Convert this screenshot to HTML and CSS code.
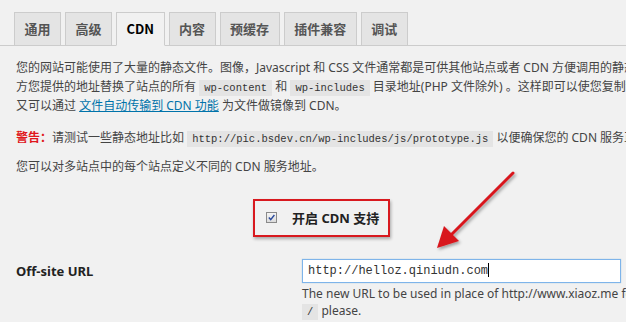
FILE: index.html
```html
<!DOCTYPE html>
<html lang="zh-CN">
<head>
<meta charset="utf-8">
<title>CDN</title>
<link rel="stylesheet" href="styles.css">
</head>
<body>
<div class="page">
  <nav class="tabs">
    <span class="tab">通用</span>
    <span class="tab">高级</span>
    <span class="tab active">CDN</span>
    <span class="tab">内容</span>
    <span class="tab">预缓存</span>
    <span class="tab">插件兼容</span>
    <span class="tab">调试</span>
  </nav>

  <p class="intro">您的网站可能使用了大量的静态文件。图像，Javascript 和 CSS 文件通常都是可供其他站点或者 CDN 方便调用的静态文件。<br>方您提供的地址替换了站点的所有 <code>wp-content</code> 和 <code>wp-includes</code> 目录地址(PHP 文件除外) 。这样即可以使您复制静态文件到 CDN 服务器，<br>又可以通过 <a href="#">文件自动传输到 CDN 功能</a> 为文件做镜像到 CDN。</p>

  <p class="warn"><strong class="warn-label">警告：</strong>请测试一些静态地址比如 <code>http://pic.bsdev.cn/wp-includes/js/prototype.js</code> 以便确保您的 CDN 服务正常工作。</p>

  <p class="multi">您可以对多站点中的每个站点定义不同的 CDN 服务地址。</p>

  <div class="enable">
    <span class="check"><svg viewBox="0 0 11 11" width="11" height="11"><path d="M2.8 5.6 L4.7 7.6 L8.4 3" fill="none" stroke="#2b4a9c" stroke-width="1.4"/></svg></span>
    <span class="enable-label">开启 CDN 支持</span>
  </div>

  <div class="form-row">
    <div class="label">Off-site URL</div>
    <div class="field">
      <div class="input">http://helloz.qiniudn.com<span class="caret"></span></div>
      <div class="desc">The new URL to be used in place of http://www.xiaoz.me for rewriting. No trailing<br><code>/</code> please.<br>For example: <code>http://cdn.xiaoz.me/wp-content/uploads/</code></div>
    </div>
  </div>

  <svg class="arrow" width="626" height="322" viewBox="0 0 626 322">
    <defs>
      <filter id="sh" x="-20%" y="-20%" width="140%" height="140%">
        <feDropShadow dx="1.5" dy="2" stdDeviation="1.5" flood-color="#000" flood-opacity="0.35"/>
      </filter>
    </defs>
    <g filter="url(#sh)">
      <line x1="513" y1="173" x2="452" y2="234" stroke="#d8191f" stroke-width="3" stroke-linecap="round"/>
      <polygon points="437,248 444,226 459,241" fill="#d8191f"/>
    </g>
  </svg>
</div>
</body>
</html>
```
FILE: styles.css
```css
html, body {
  margin: 0;
  padding: 0;
  background: #f1f1f1;
}
.page {
  position: relative;
  width: 626px;
  height: 322px;
  overflow: hidden;
  font-family: "Noto Sans", "Noto Sans CJK SC", sans-serif;
  font-size: 12px;
  color: #444;
}
.tabs {
  display: flex;
  gap: 4px;
  padding: 12px 0 0 14px;
  border-bottom: 1px solid #ccc;
  width: 1000px;
}
.tab {
  display: block;
  height: 32px;
  line-height: 32px;
  padding: 0 9.5px;
  margin-bottom: -1px;
  border: 1px solid #ccc;
  background: #e4e4e4;
  color: #555;
  font-family: "Noto Sans CJK SC", sans-serif;
  font-weight: 700;
  font-size: 13px;
}
.tab.active {
  background: #f1f1f1;
  border-bottom-color: #f1f1f1;
  color: #000;
}
p {
  margin: 0;
  white-space: nowrap;
  line-height: 18.5px;
  padding-left: 16px;
}
.intro {
  margin-top: 13px;
}
code {
  font-family: "Liberation Mono", monospace;
  font-size: 10.5px;
  background: #e4e4e4;
  padding: 2px 5px;
  color: #333;
}
a {
  color: #0073aa;
  text-decoration: underline;
}
.warn {
  margin-top: 13px;
}
.warn-label {
  color: #e0161c;
  font-weight: 700;
}
.multi {
  margin-top: 10px;
}
.enable {
  margin: 22px 0 0 253px;
  width: 133px;
  height: 34px;
  border: 2px solid #d8191f;
  box-shadow: 1px 2px 3px rgba(0,0,0,0.3);
  display: flex;
  align-items: center;
  box-sizing: content-box;
}
.check {
  width: 9px;
  height: 9px;
  margin-left: 11px;
  border: 1px solid #8a8a8a;
  background: linear-gradient(#f4f4f4, #dcdcdc);
  position: relative;
}
.check svg {
  position: absolute;
  left: -1px;
  top: -1px;
}
.enable-label {
  margin-left: 15px;
  font-family: "Noto Sans", "Noto Sans CJK SC", sans-serif;
  font-weight: 700;
  font-size: 13px;
  color: #222;
}
.form-row {
  display: grid;
  grid-template-columns: 286px 1fr;
  margin-top: 22px;
  padding-left: 16px;
}
.label {
  font-weight: 700;
  font-size: 13px;
  color: #222;
  padding-top: 3px;
}
.field {
  white-space: nowrap;
}
.input {
  width: 312px;
  height: 22px;
  line-height: 22px;
  border: 1px solid #7eb4ea;
  background: #fff;
  padding-left: 5px;
  font-family: "Liberation Mono", monospace;
  font-size: 12px;
  color: #333;
  box-shadow: 0 0 1px rgba(30,140,190,0.4);
}
.caret {
  display: inline-block;
  width: 1px;
  height: 14px;
  background: #000;
  vertical-align: -3px;
}
.desc {
  margin-top: 2px;
  line-height: 17px;
  color: #444;
}
.arrow {
  position: absolute;
  left: 0;
  top: 0;
  pointer-events: none;
}
```
